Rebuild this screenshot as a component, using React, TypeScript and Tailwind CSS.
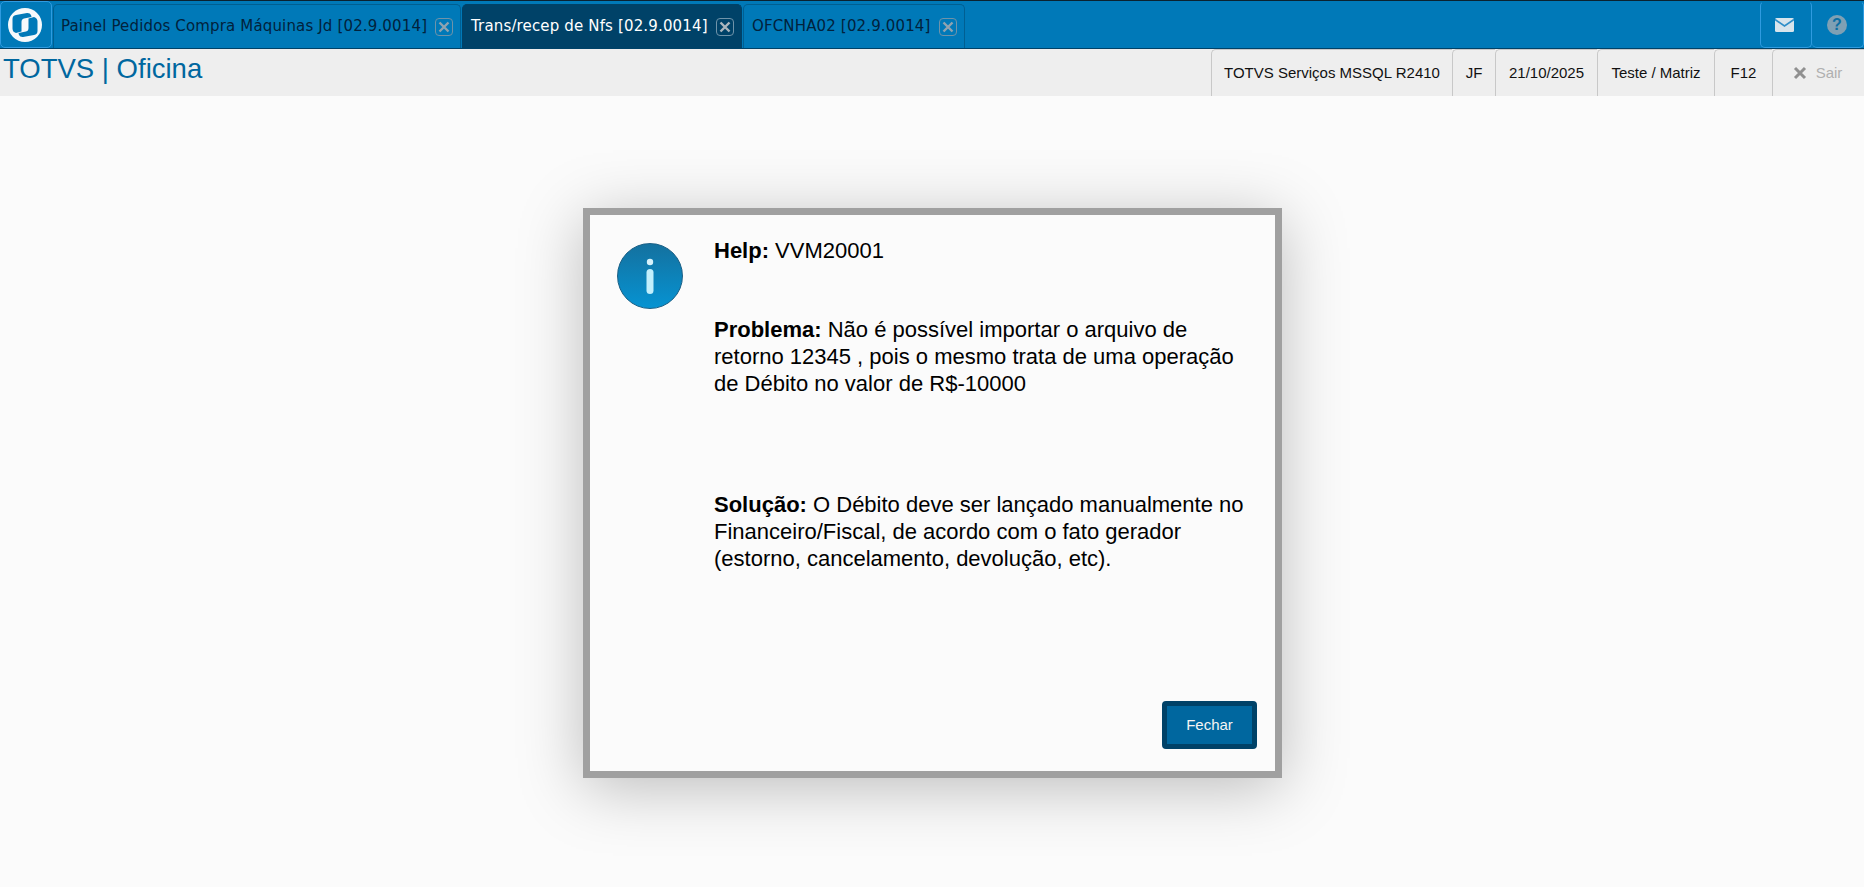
import React from "react";

function CloseBox({ dark }: { dark?: boolean }) {
  return (
    <span className="ml-[8px] flex h-[18px] w-[18px] shrink-0 items-center justify-center rounded-[4px] border border-[#6f93a9]">
      <svg width="12" height="12" viewBox="0 0 12 12">
        <path d="M1.5 1.5 L10.5 10.5 M10.5 1.5 L1.5 10.5" stroke={dark ? "#aab6be" : "#8fa3b0"} strokeWidth="2.4" />
      </svg>
    </span>
  );
}

function Tab({ label, active, w, pad }: { label: string; active?: boolean; w: string; pad: string }) {
  return (
    <div
      className={`flex h-[44px] items-center rounded-tl-[5px] rounded-tr-[5px] border border-b-0 ${pad} ${w} ${
        active ? "border-[#004268] bg-[#004268] text-white" : "border-[#005f92] bg-[#0079b8] text-[#02223c]"
      }`}
    >
      <span className="whitespace-nowrap font-['DejaVu_Sans',sans-serif] text-[15px] leading-none tracking-[0.15px]">{label}</span>
      <CloseBox dark={active} />
    </div>
  );
}

function InfoCell({ children, w }: { children: React.ReactNode; w: string }) {
  return (
    <div className={`flex h-full items-center justify-center whitespace-nowrap rounded-tl-[5px] border-l border-t border-[#c8c8c8] text-[15px] text-[#111] ${w}`}>
      {children}
    </div>
  );
}

export default function App() {
  return (
    <div className="flex h-[887px] w-[1864px] flex-col overflow-hidden bg-[#fbfbfb] font-['Liberation_Sans',Arial,sans-serif]">
      <div className="flex h-[49px] shrink-0 items-end justify-between border-b border-t border-b-[#004268] border-t-[#0b2230] bg-[#0079b8]">
        <div className="flex h-full items-end gap-[1px]">
          <div className="flex h-[47px] w-[52px] items-center justify-center rounded-[5px] border border-[#2f9be0] bg-[#0079b8] pr-[2px]">
            <svg width="40" height="40" viewBox="0 0 40 40">
              <circle cx="20" cy="20" r="17" fill="#f6f9fb" />
              <path d="M7.5 14 Q7.5 10.5 11 10 L22 8 Q25 7.8 26 10 L26.5 12 L19 13.5 Q16.5 14 16.5 17 L16.5 26.5 L11 28 Q7.5 27 7.5 23.5 Z" fill="#0079b8" />
              <path d="M32.5 26 Q32.5 29.5 29 30 L18 32 Q15 32.2 14 30 L13.5 28 L21 26.5 Q23.5 26 23.5 23 L23.5 13.5 L29 12 Q32.5 13 32.5 16.5 Z" fill="#0079b8" />
            </svg>
          </div>
          <Tab label="Painel Pedidos Compra Máquinas Jd [02.9.0014]" w="w-[408px]" pad="pl-[7px]" />
          <Tab label="Trans/recep de Nfs [02.9.0014]" active w="w-[280px]" pad="pl-[8px]" />
          <Tab label="OFCNHA02 [02.9.0014]" w="w-[222px]" pad="pl-[8px]" />
        </div>
        <div className="flex h-full items-end">
          <div className="flex h-[47px] w-[52px] items-center justify-center rounded-[5px] border border-[#2f9be0] border-t-transparent pr-[3px]">
            <svg width="19" height="14" viewBox="0 0 19 14">
              <rect width="19" height="14" rx="1.5" fill="#d8e4ec" />
              <path d="M0 1.5 L9.5 8 L19 1.5" fill="none" stroke="#2f8ec8" strokeWidth="1.6" />
            </svg>
          </div>
          <div className="flex h-[47px] w-[52px] items-center justify-center rounded-[5px] border border-l-0 border-[#2f9be0] border-t-transparent pr-[1px]">
            <div className="flex h-[20px] w-[20px] items-center justify-center rounded-full bg-[#7fa0b4] text-[16px] font-bold leading-none text-[#0b6ea3]">?</div>
          </div>
        </div>
      </div>

      <div className="flex h-[47px] shrink-0 items-stretch justify-between bg-[#eeeeee]">
        <div className="pl-[3px] pt-[5px] text-[27.5px] leading-[30px] text-[#00679f]">TOTVS | Oficina</div>
        <div className="flex">
          <InfoCell w="w-[241px]">TOTVS Serviços MSSQL R2410</InfoCell>
          <InfoCell w="w-[43px]">JF</InfoCell>
          <InfoCell w="w-[102px]">21/10/2025</InfoCell>
          <InfoCell w="w-[117px]">Teste / Matriz</InfoCell>
          <InfoCell w="w-[58px]">F12</InfoCell>
          <div className="flex h-full w-[92px] items-center justify-center gap-[9px] rounded-tl-[5px] border-l border-t border-[#c8c8c8] pr-[2px] text-[15px] text-[#b0b0b0]">
            <svg width="14" height="14" viewBox="0 0 14 14">
              <path d="M2 2 L12 12 M12 2 L2 12" stroke="#909090" strokeWidth="3" />
            </svg>
            Sair
          </div>
        </div>
      </div>

      <div className="flex flex-1 justify-center pl-[1px] pt-[112px]">
        <div className="flex h-[570px] w-[699px] flex-col border-[7px] border-[#a0a0a0] bg-[#fbfbfb] shadow-[0_10px_60px_rgba(0,0,0,0.25)]">
          <div className="flex flex-1 pl-[27px] pt-[28px]">
            <div className="flex h-[66px] w-[66px] shrink-0 items-center justify-center rounded-full border border-[#1a5f85] bg-[linear-gradient(#14719f,#0693d2)]">
              <svg width="12" height="36" viewBox="0 0 12 36">
                <circle cx="6" cy="4" r="3.2" fill="#d6f2fb" />
                <rect x="2.5" y="11" width="7" height="25" rx="3.5" fill="#c2effc" />
              </svg>
            </div>
            <div className="ml-[31px] w-[540px] text-[22px] leading-[27px] text-black">
              <p className="mt-[-6px]">
                <b>Help:</b> VVM20001
              </p>
              <p className="mt-[52px]">
                <b>Problema:</b> Não é possível importar o arquivo de retorno 12345 , pois o mesmo trata de uma operação de Débito no valor de R$-10000
              </p>
              <p className="mt-[94px]">
                <b>Solução:</b> O Débito deve ser lançado manualmente no Financeiro/Fiscal, de acordo com o fato gerador (estorno, cancelamento, devolução, etc).
              </p>
            </div>
          </div>
          <div className="flex justify-end pb-[22px] pr-[18px]">
            <button className="h-[48px] w-[95px] rounded-[4px] border-[5px] border-[#004268] bg-[#00679f] text-[15px] text-[#f4f4f4]">Fechar</button>
          </div>
        </div>
      </div>
    </div>
  );
}
